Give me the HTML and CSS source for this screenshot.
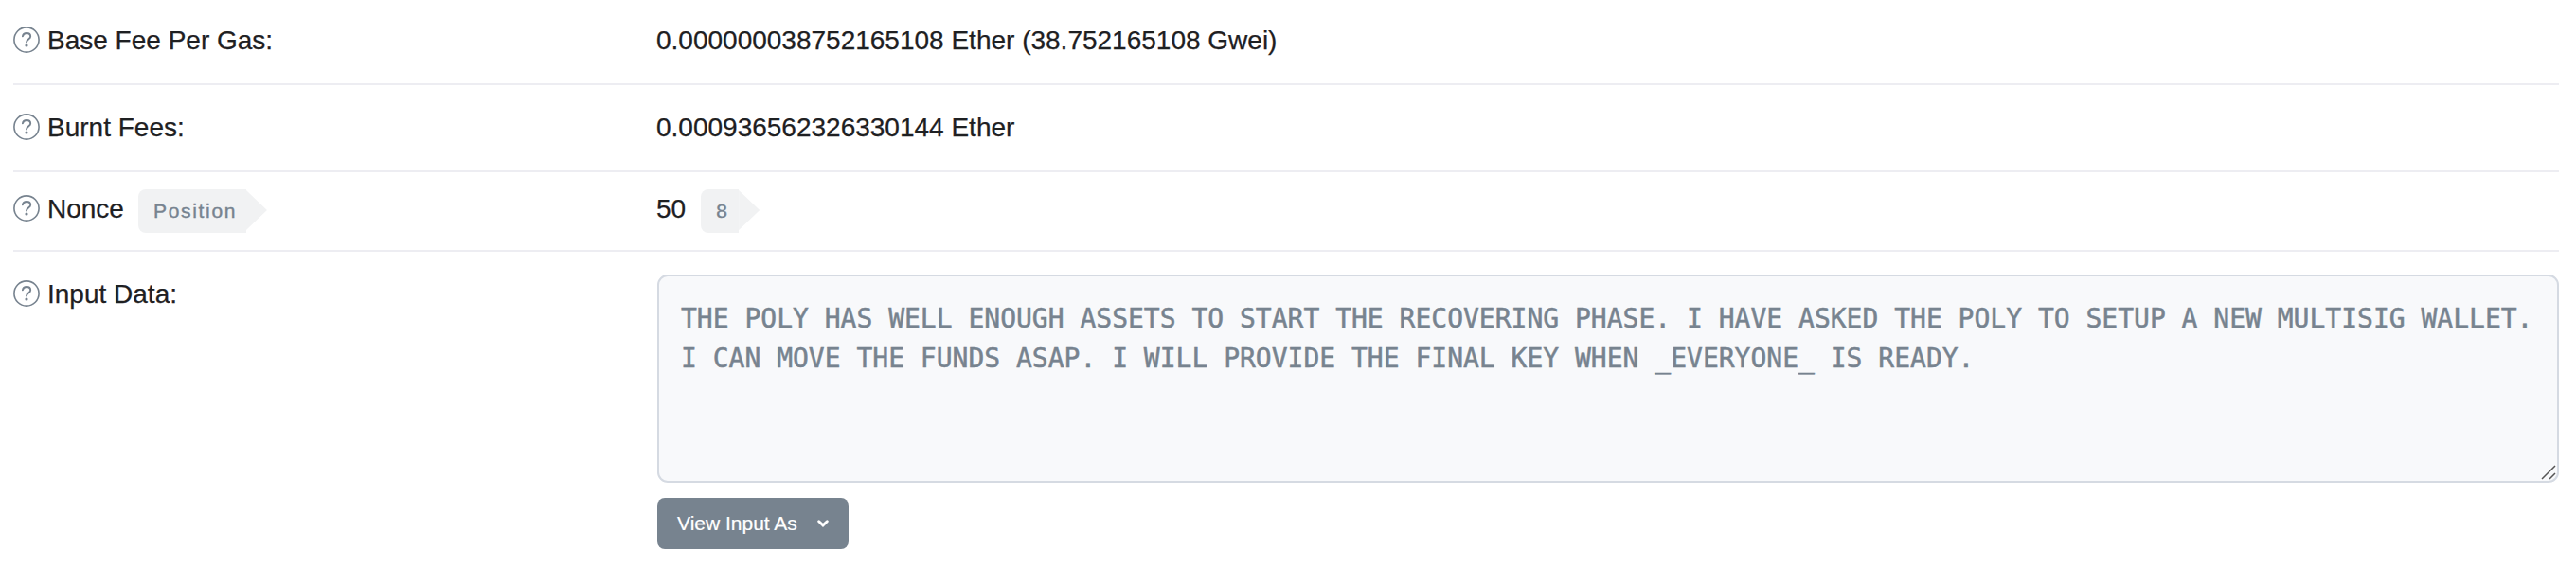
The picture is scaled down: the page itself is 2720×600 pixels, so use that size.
FILE: index.html
```
<!DOCTYPE html>
<html lang="en">
<head>
<meta charset="utf-8">
<title>Transaction Details</title>
<link rel="stylesheet" href="styles.css">
</head>
<body>
<svg class="sprite" aria-hidden="true">
  <symbol id="help" viewBox="0 0 28 28">
    <circle cx="14" cy="14" r="13.1" fill="none" stroke="currentColor" stroke-width="1.6"/>
    <path d="M9.9 10.300C10.3 8.100 12 7 14.100 7c2.300 0 4.100 1.400 4.100 3.500 0 2.900-4.200 3.200-4.200 6" fill="none" stroke="currentColor" stroke-width="1.900" stroke-linecap="round"/>
    <circle cx="14" cy="20" r="1.600" fill="currentColor"/>
  </symbol>
</svg>
<main class="details">
  <div class="row">
    <div class="label"><svg class="help"><use href="#help"/></svg><span>Base Fee Per Gas:</span></div>
    <div class="value">0.000000038752165108 Ether (38.752165108 Gwei)</div>
  </div>
  <div class="row row-burnt">
    <div class="label"><svg class="help"><use href="#help"/></svg><span>Burnt Fees:</span></div>
    <div class="value">0.000936562326330144 Ether</div>
  </div>
  <div class="row row-nonce">
    <div class="label"><svg class="help"><use href="#help"/></svg><span>Nonce</span><span class="badge badge-position">Position</span></div>
    <div class="value">50<span class="badge badge-index">8</span></div>
  </div>
  <div class="row row-input">
    <div class="label"><svg class="help"><use href="#help"/></svg><span>Input Data:</span></div>
    <div class="value-stack">
      <div class="input-data">THE POLY HAS WELL ENOUGH ASSETS TO START THE RECOVERING PHASE. I HAVE ASKED THE POLY TO SETUP A NEW MULTISIG WALLET.<br>I CAN MOVE THE FUNDS ASAP. I WILL PROVIDE THE FINAL KEY WHEN _EVERYONE_ IS READY.
        <svg class="grip" viewBox="0 0 16 16"><path d="M1 15 15 1M9 15l6-6" fill="none" stroke="#555" stroke-width="1.500"/></svg>
      </div>
      <button class="view-as" type="button">View Input As
        <svg class="chevron" viewBox="0 0 12 8"><path d="M1.700 1.800 6 5.900l4.300-4.100" fill="none" stroke="currentColor" stroke-width="2.900" stroke-linecap="round"/></svg>
      </button>
    </div>
  </div>
</main>
</body>
</html>
```
FILE: styles.css
```
body {
  margin: 0;
  background: #fff;
  color: #1e2022;
  font: 28px/42px "Liberation Sans", Arial, sans-serif;
}

.sprite {
  position: absolute;
  width: 0;
  height: 0;
}

.details {
  padding: 0 18px 0 14px;
}

.row {
  display: grid;
  grid-template-columns: 680px 1fr;
  align-items: start;
  box-sizing: border-box;
  height: 90px;
  padding-top: 22px;
  border-bottom: 2px solid #ededf2;
}

.row-burnt {
  height: 92px;
  padding-top: 24px;
}

.row-nonce {
  height: 84px;
  padding-top: 18px;
}

.row-input {
  height: auto;
  padding-top: 24px;
  border-bottom: 0;
}

.label,
.value {
  display: flex;
  white-space: nowrap;
  -webkit-text-stroke: 0.25px currentColor;
}

.value {
  margin-left: -1px;
}

.help {
  flex: none;
  width: 28px;
  height: 28px;
  margin: 6px 8px 0 0;
  color: #77838f;
}

.badge {
  position: relative;
  box-sizing: border-box;
  height: 46px;
  margin-left: 15px;
  padding-left: 16px;
  border-radius: 8px 0 0 8px;
  background: #f1f2f3;
  color: #77838f;
  font-size: 21px;
  line-height: 46px;
  letter-spacing: 1.7px;
  -webkit-text-stroke: 0.4px #77838f;
}

.badge::after {
  content: "";
  position: absolute;
  top: 1px;
  left: 100%;
  width: 22px;
  height: 42px;
  background: #f1f2f3;
  clip-path: polygon(0 0, 100% 50%, 0 100%);
}

.badge-position {
  width: 114px;
}

.badge-index {
  width: 40px;
  margin-left: 16px;
}

.input-data {
  position: relative;
  box-sizing: border-box;
  height: 220px;
  padding: 24px 23px;
  border: 2px solid #d5dae2;
  border-radius: 11px;
  background: #f8f9fb;
  color: #77838f;
  font: 28px/42px "DejaVu Sans Mono", monospace;
  white-space: nowrap;
  -webkit-text-stroke: 0.5px #77838f;
}

.grip {
  position: absolute;
  right: 1px;
  bottom: 1px;
  width: 16px;
  height: 16px;
}

.view-as {
  display: flex;
  align-items: center;
  box-sizing: border-box;
  width: 202px;
  height: 54px;
  margin-top: 16px;
  padding: 0 21px;
  border: 0;
  border-radius: 8px;
  background: #77838f;
  color: #fff;
  font: 21px/32px "Liberation Sans", Arial, sans-serif;
  white-space: nowrap;
  -webkit-text-stroke: 0.2px #fff;
}

.chevron {
  width: 12px;
  height: 8px;
  margin-left: 21px;
}
```
